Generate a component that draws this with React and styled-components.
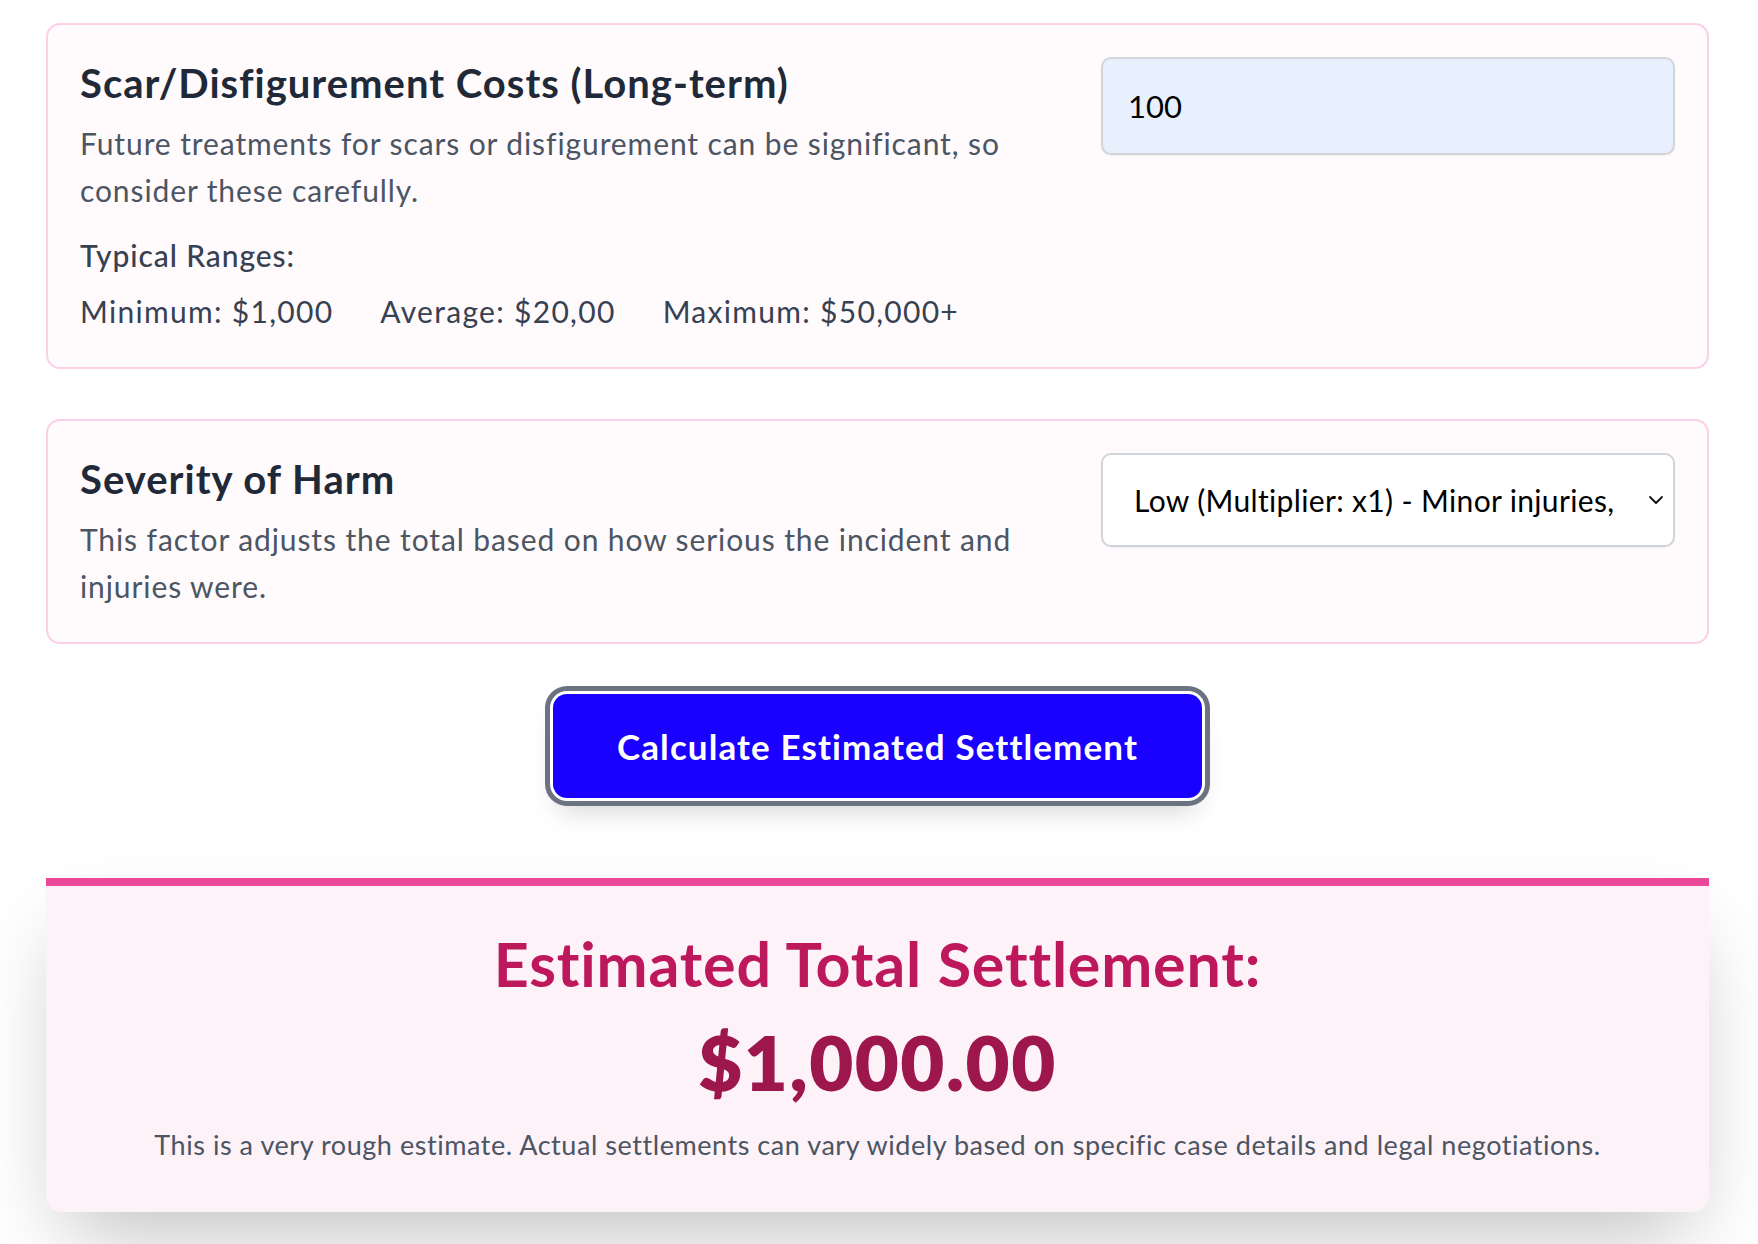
import styled, { createGlobalStyle } from "styled-components";
import { useState } from "react";

const GlobalStyle = createGlobalStyle`
  * {
    box-sizing: border-box;
  }
  body {
    margin: 0;
    background: #ffffff;
    font-family: Lato, "Open Sans", Arial, sans-serif;
    color: #1f2937;
  }
`;

// severity options for the select
const SEVERITY_OPTIONS = [
  { value: "low", label: "Low (Multiplier: x1) - Minor injuries, quick recovery" },
  { value: "medium", label: "Medium (Multiplier: x2) - Moderate injuries, some treatment" },
  { value: "high", label: "High (Multiplier: x3) - Serious injuries, long recovery" },
  { value: "severe", label: "Severe (Multiplier: x5) - Permanent or life-changing harm" },
];

const RANGES = ["Minimum: $1,000", "Average: $20,00", "Maximum: $50,000+"];

function App() {
  const [scarCost, setScarCost] = useState("100");
  const [severity, setSeverity] = useState("low");

  return (
    <>
      <GlobalStyle />
      <Page>
        {/* scar / disfigurement */}
        <FieldCard>
          <FieldInfo>
            <FieldTitle>Scar/Disfigurement Costs (Long-term)</FieldTitle>
            <FieldText>
              Future treatments for scars or disfigurement can be significant, so
              consider these carefully.
            </FieldText>
            <RangesLabel>Typical Ranges:</RangesLabel>
            <RangesRow>
              {RANGES.map((r) => (
                <RangeItem key={r}>{r}</RangeItem>
              ))}
            </RangesRow>
          </FieldInfo>
          <AmountInput
            type="text"
            value={scarCost}
            onChange={(e) => setScarCost(e.target.value)}
          />
        </FieldCard>

        {/* severity multiplier */}
        <FieldCard>
          <FieldInfo>
            <FieldTitle>Severity of Harm</FieldTitle>
            <FieldText>
              This factor adjusts the total based on how serious the incident and
              injuries were.
            </FieldText>
          </FieldInfo>
          <SelectWrap>
            <SeveritySelect
              value={severity}
              onChange={(e) => setSeverity(e.target.value)}
            >
              {SEVERITY_OPTIONS.map((o) => (
                <option key={o.value} value={o.value}>
                  {o.label}
                </option>
              ))}
            </SeveritySelect>
            <Chevron viewBox="0 0 14 8" aria-hidden="true">
              <path
                d="M1 1l6 6 6-6"
                fill="none"
                stroke="#111"
                strokeWidth="1.8"
                strokeLinecap="round"
                strokeLinejoin="round"
              />
            </Chevron>
          </SelectWrap>
        </FieldCard>

        <ButtonRow>
          <CalcButton type="button">Calculate Estimated Settlement</CalcButton>
        </ButtonRow>

        {/* result */}
        <ResultCard>
          <ResultTitle>Estimated Total Settlement:</ResultTitle>
          <ResultAmount>$1,000.00</ResultAmount>
          <ResultNote>
            This is a very rough estimate. Actual settlements can vary widely based on
            specific case details and legal negotiations.
          </ResultNote>
        </ResultCard>
      </Page>
    </>
  );
}

const Page = styled.div`
  padding: 23px 49px 40px 46px;
  display: flex;
  flex-direction: column;
`;

const FieldCard = styled.section`
  display: grid;
  grid-template-columns: 1fr 574px;
  column-gap: 50px;
  align-items: start;
  padding: 32px;
  border: 2px solid #fbcfe8;
  border-radius: 14px;
  background: #fffafc;
  margin-bottom: 50px;
`;

const FieldInfo = styled.div`
  display: flex;
  flex-direction: column;
`;

const FieldTitle = styled.h3`
  margin: 0 0 10px;
  font-size: 40px;
  line-height: 53px;
  font-weight: 700;
  letter-spacing: 1px;
  color: #1f2937;
`;

const FieldText = styled.p`
  margin: 0;
  font-size: 30px;
  line-height: 47px;
  letter-spacing: 0.9px;
  color: #4b5563;
`;

const RangesLabel = styled.div`
  margin-top: 18px;
  font-size: 30px;
  line-height: 47px;
  font-weight: 500;
  letter-spacing: 0.9px;
  color: #374151;
`;

const RangesRow = styled.div`
  margin-top: 9px;
  display: flex;
  gap: 47px;
`;

const RangeItem = styled.span`
  font-size: 30px;
  line-height: 47px;
  letter-spacing: 1.3px;
  color: #374151;
`;

const AmountInput = styled.input`
  width: 100%;
  height: 98px;
  padding: 0 25px;
  border: 2px solid #d1d5db;
  border-radius: 10px;
  background: #e8f0fe;
  font-family: Lato, "Open Sans", Arial, sans-serif;
  font-size: 31px;
  color: #000;
  box-shadow: 0 1px 2px rgba(0, 0, 0, 0.05);
  outline: none;
`;

const SelectWrap = styled.div`
  position: relative;
`;

const SeveritySelect = styled.select`
  appearance: none;
  width: 100%;
  height: 94px;
  padding: 0 55px 0 31px;
  border: 2px solid #d1d5db;
  border-radius: 10px;
  background: #ffffff;
  font-family: Lato, "Open Sans", Arial, sans-serif;
  font-size: 30px;
  letter-spacing: 0.35px;
  color: #000;
  box-shadow: 0 1px 2px rgba(0, 0, 0, 0.05);
  outline: none;
`;

const Chevron = styled.svg`
  position: absolute;
  right: 12px;
  top: 50%;
  width: 14px;
  height: 8px;
  margin-top: -4px;
  pointer-events: none;
`;

const ButtonRow = styled.div`
  display: flex;
  justify-content: center;
  margin: 0 0 80px;
`;

const CalcButton = styled.button`
  height: 104px;
  padding: 0 64px;
  border: none;
  border-radius: 14px;
  background: #1a00ff;
  color: #ffffff;
  font-family: Lato, "Open Sans", Arial, sans-serif;
  font-size: 35px;
  font-weight: 700;
  letter-spacing: 1.1px;
  cursor: pointer;
  box-shadow: 0 0 0 3px #ffffff, 0 0 0 8px #6b7280,
    0 18px 28px -6px rgba(0, 0, 0, 0.18);
`;

const ResultCard = styled.section`
  border-top: 8px solid #ec4899;
  border-radius: 0 0 16px 16px;
  background: #fdf2f8;
  padding: 42px 40px 47px;
  text-align: center;
  box-shadow: 0 40px 80px -20px rgba(0, 0, 0, 0.25);
`;

const ResultTitle = styled.h2`
  margin: 0;
  font-size: 61px;
  line-height: 72px;
  font-weight: 700;
  letter-spacing: 0.8px;
  color: #be185d;
`;

const ResultAmount = styled.div`
  margin-top: 16px;
  font-size: 76px;
  line-height: 91px;
  font-weight: 800;
  letter-spacing: 1.5px;
  color: #9d174d;
`;

const ResultNote = styled.p`
  margin: 18px 0 0;
  font-size: 27px;
  line-height: 40px;
  letter-spacing: 0.55px;
  color: #4b5563;
`;

export default App;
